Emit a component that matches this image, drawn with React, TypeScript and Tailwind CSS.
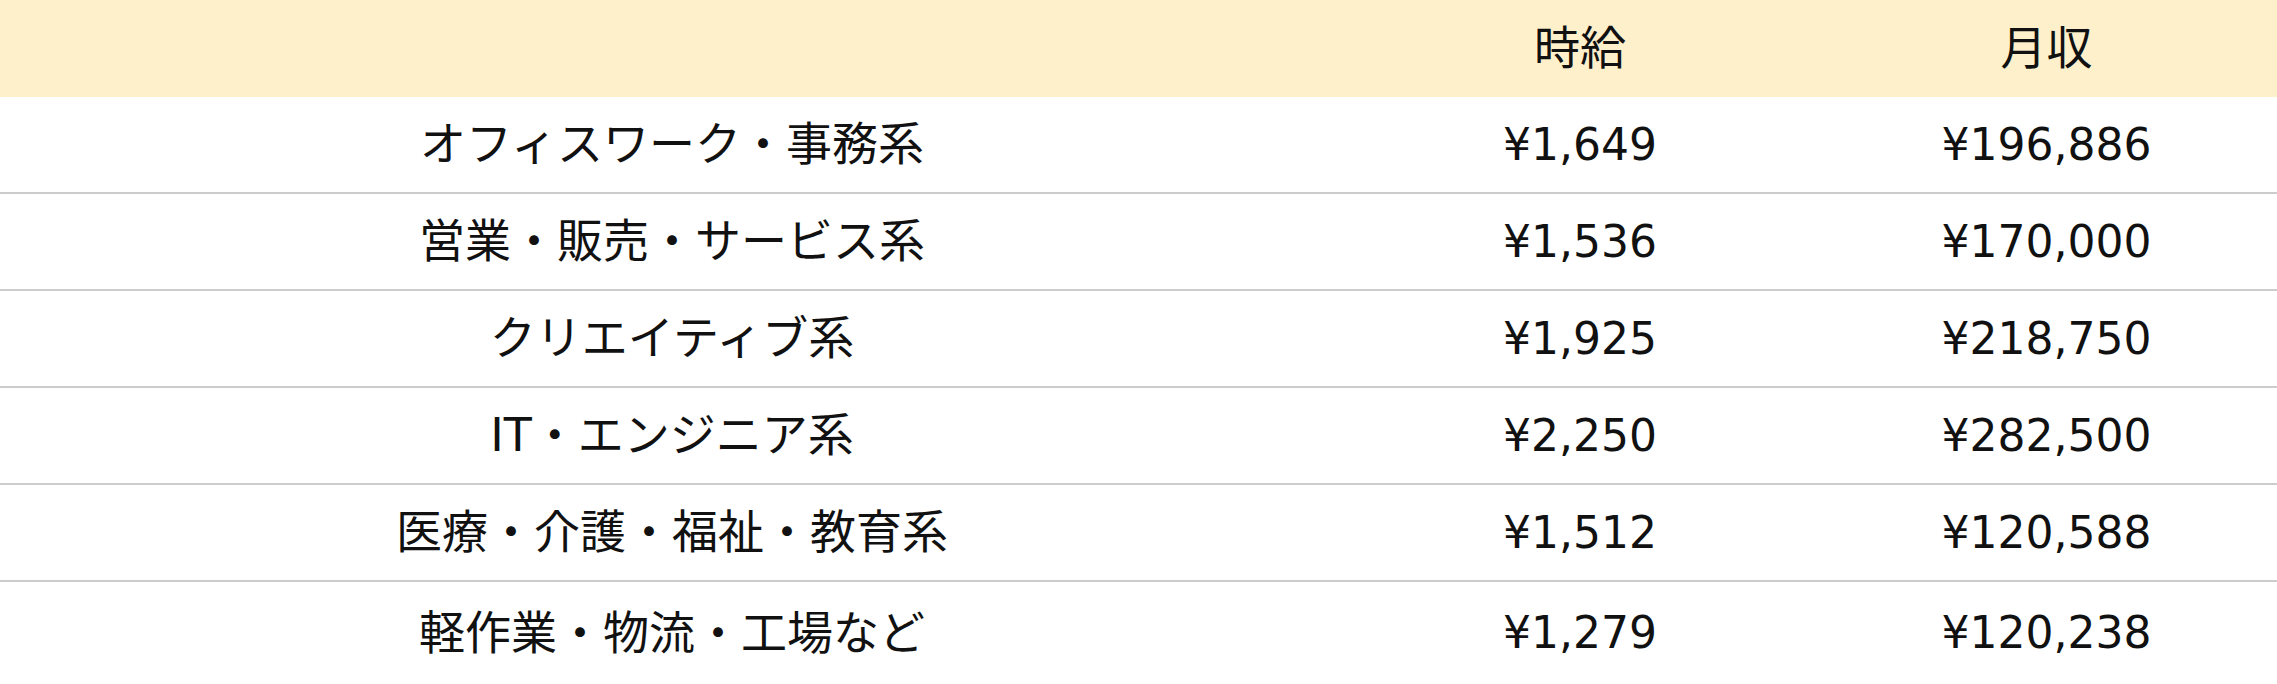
const rows = [
  { name: 'オフィスワーク・事務系', hourly: '¥1,649', monthly: '¥196,886' },
  { name: '営業・販売・サービス系', hourly: '¥1,536', monthly: '¥170,000' },
  { name: 'クリエイティブ系', hourly: '¥1,925', monthly: '¥218,750' },
  { name: 'IT・エンジニア系', hourly: '¥2,250', monthly: '¥282,500' },
  { name: '医療・介護・福祉・教育系', hourly: '¥1,512', monthly: '¥120,588' },
  { name: '軽作業・物流・工場など', hourly: '¥1,279', monthly: '¥120,238' },
]

export default function App() {
  return (
    <div
      className="w-[2277px] h-[684px] overflow-hidden bg-white text-[44px] text-[#111]"
      style={{ fontFamily: '"DejaVu Sans", "Noto Sans CJK JP", sans-serif' }}
    >
      {/* Header */}
      <div className="grid grid-cols-[1344px_472px_461px] h-[97px] items-center bg-[#fff0cc] text-[46px]">
        <div />
        <div className="text-center">時給</div>
        <div className="text-center">月収</div>
      </div>

      {/* Body rows */}
      {rows.map((row, i) => (
        <div
          key={row.name}
          className={`grid grid-cols-[1344px_472px_461px] items-center ${
            i < rows.length - 1 ? 'h-[97px] border-b-2 border-[#cccccc]' : 'h-[102px]'
          }`}
        >
          <div className="text-center text-[46px]">{row.name}</div>
          <div className="text-center">{row.hourly}</div>
          <div className="text-center">{row.monthly}</div>
        </div>
      ))}
    </div>
  )
}
